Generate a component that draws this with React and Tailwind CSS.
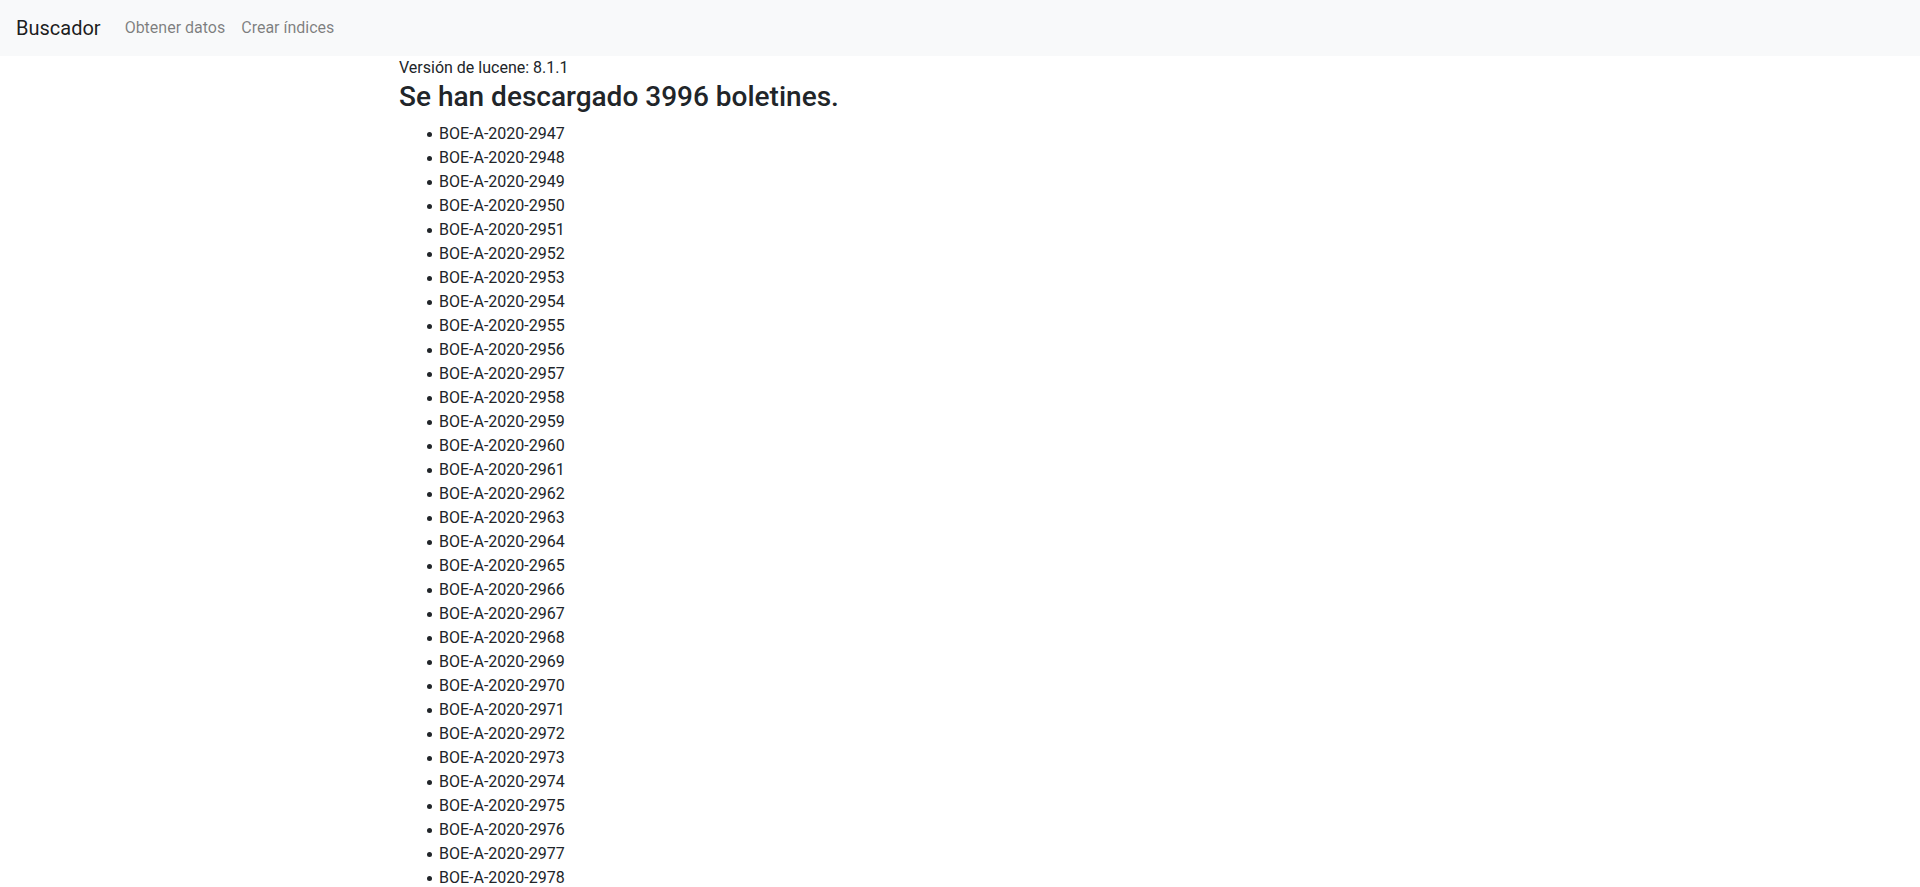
import React from 'react';

const boletines = Array.from({ length: 50 }, (_, i) => `BOE-A-2020-${2947 + i}`);

const App = () => {
  return (
    <div className="min-h-screen bg-white text-[#212529] text-base leading-6" style={{ fontFamily: 'Roboto, "Helvetica Neue", Arial, sans-serif' }}>
      <nav className="h-14 bg-[#f8f9fa] flex items-center px-4">
        <a href="#" className="text-xl leading-[30px] text-[rgba(0,0,0,0.9)] mr-4">Buscador</a>
        <ul className="flex">
          <li><a href="#" className="block px-2 py-2 text-[rgba(0,0,0,0.5)]">Obtener datos</a></li>
          <li><a href="#" className="block px-2 py-2 text-[rgba(0,0,0,0.5)]">Crear índices</a></li>
        </ul>
      </nav>
      <div className="w-[1152px] mx-auto px-[15px]">
        <div>Versión de lucene: 8.1.1</div>
        <h3 className="text-[28px] leading-[1.2] font-medium mb-2">Se han descargado 3996 boletines.</h3>
        <ul className="list-none pl-10">
          {boletines.map((b) => (
            <li
              key={b}
              className="relative before:content-[''] before:absolute before:left-[-12px] before:top-[10px] before:w-[5px] before:h-[5px] before:rounded-full before:bg-[#212529]"
            >
              {b}
            </li>
          ))}
        </ul>
      </div>
    </div>
  );
};

export default App;
